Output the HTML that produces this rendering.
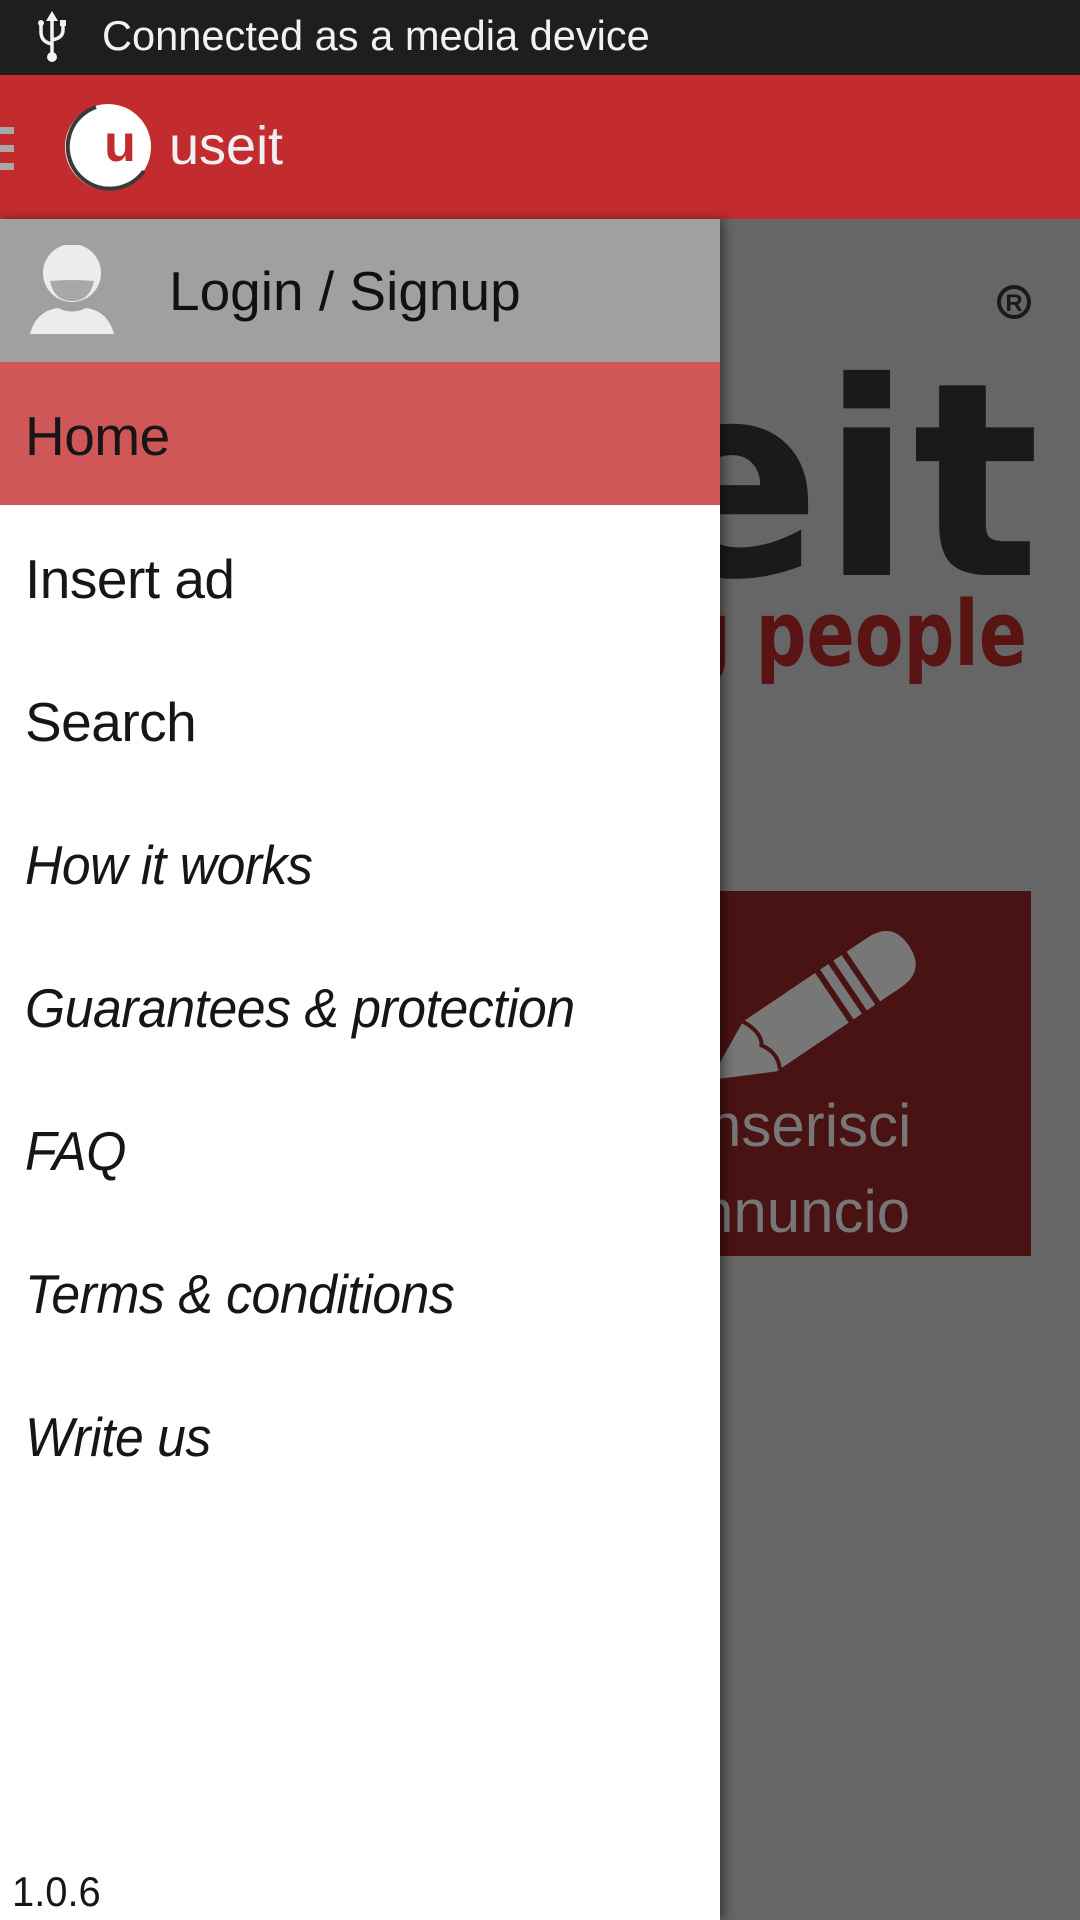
<!DOCTYPE html>
<html><head><meta charset="utf-8"><style>
*{margin:0;padding:0;box-sizing:border-box}
body{width:1080px;height:1920px;overflow:hidden;position:relative;background:#666;font-family:"Liberation Sans",sans-serif}
.status{position:absolute;left:0;top:0;width:1080px;height:75px;background:#1e1e1e;color:#f2f2f2;font-size:42px}
.status span{position:absolute;left:102px;top:12px;transform:scaleX(0.99);transform-origin:left}
.bar{position:absolute;left:0;top:75px;width:1080px;height:144px;background:#c22c2f}
.bar .t{position:absolute;left:169px;top:40px;font-size:54px;color:#f0f0f0}
.ham{position:absolute;left:0;width:14px;height:7px;background:#a8a8a8}
.drawer{position:absolute;left:0;top:219px;width:720px;height:1701px;background:#fff;box-shadow:4px 0 10px rgba(0,0,0,.45)}
.login{height:143px;background:#a0a0a0;position:relative}
.login span{position:absolute;left:169px;top:40px;font-size:55px;color:#111}
.item{height:143px;position:relative;font-size:55px;color:#161616}
.item span{position:absolute;left:25px;top:42px;letter-spacing:-0.5px;transform-origin:left;white-space:nowrap}
.home{background:#d05757}
.i span{font-style:italic;transform:scaleX(0.94)}
.ver{position:absolute;left:12px;bottom:4px;font-size:42px;color:#161616;transform:scaleX(0.95);transform-origin:left}
</style></head><body>
<div class="status">
<svg style="position:absolute;left:36px;top:10px" width="32" height="54" viewBox="0 0 32 54"><path d="M16 8 L16 44 M16 34 Q5 32 5 22 V14 M16 30 Q27 28 27 20 V14" stroke="#f2f2f2" stroke-width="3.5" fill="none"/><path d="M10 11h12l-6-10z" fill="#f2f2f2"/><circle cx="16" cy="47" r="5" fill="#f2f2f2"/><circle cx="5" cy="13" r="3" fill="#f2f2f2"/><rect x="24" y="10" width="6" height="6" fill="#f2f2f2"/></svg>
<span>Connected as a media device</span></div>
<div class="bar">
<div class="ham" style="top:52px"></div><div class="ham" style="top:70px"></div><div class="ham" style="top:88px"></div>
<svg style="position:absolute;left:62px;top:26px" width="96" height="96" viewBox="0 0 96 96"><circle cx="46" cy="46" r="43" fill="#fff"/><path d="M34 6 A42 42 0 1 0 82 70" stroke="#3a3a3a" stroke-width="4" fill="none"/><text x="58" y="60" font-family="Liberation Sans" font-weight="bold" font-size="52" fill="#c22c2f" text-anchor="middle">u</text></svg>
<div class="t">useit</div></div>
<svg style="position:absolute;left:700px;top:270px" width="380" height="1000" viewBox="0 0 380 1000">
<circle cx="314" cy="32" r="15" stroke="#1a1a1a" stroke-width="4" fill="none"/><text x="314" y="41" font-size="24" font-weight="bold" font-family="Liberation Sans" fill="#1a1a1a" text-anchor="middle">R</text>
<text x="-60" y="305" font-family="DejaVu Sans" font-weight="bold" font-size="270" fill="#1a1a1a" textLength="400" lengthAdjust="spacingAndGlyphs">eit</text>
<text x="-20" y="395" font-family="DejaVu Sans" font-weight="bold" font-size="90" fill="#5a1414" textLength="347" lengthAdjust="spacingAndGlyphs">g people</text>
<rect x="0" y="621" width="331" height="365" fill="#4a1313"/>
<g transform="translate(10,810) rotate(-34)">
<path d="M0 0 L60 -30 L210 -30 Q240 -30 240 0 Q240 30 210 30 L60 30 Z" fill="#777"/>
<path d="M150 -32 V32 M166 -32 V32 M182 -32 V32" stroke="#4a1313" stroke-width="6"/>
<path d="M60 -30 Q70 -10 62 0 Q72 15 64 30" stroke="#4a1313" stroke-width="4" fill="none"/>
</g>
<text x="8" y="876" font-size="60" fill="#777" font-family="Liberation Sans">nserisci</text>
<text x="0" y="962" font-size="60" fill="#777" font-family="Liberation Sans">nnuncio</text>
</svg>
<div class="drawer">
<div class="login">
<svg style="position:absolute;left:28px;top:26px" width="90" height="96" viewBox="0 0 90 96"><circle cx="44" cy="28" r="29" fill="#ececec"/><path d="M22 36 Q44 34 66 36 Q62 56 44 56 Q26 56 22 36z" fill="#a8a8a8"/><path d="M2 89 Q8 66 30 63 Q44 70 58 63 Q80 66 86 89z" fill="#ececec"/></svg>
<span>Login / Signup</span></div>
<div class="item home"><span>Home</span></div>
<div class="item"><span>Insert ad</span></div>
<div class="item"><span>Search</span></div>
<div class="item i"><span>How it works</span></div>
<div class="item i"><span>Guarantees &amp; protection</span></div>
<div class="item i"><span>FAQ</span></div>
<div class="item i"><span>Terms &amp; conditions</span></div>
<div class="item i"><span>Write us</span></div>
<div class="ver">1.0.6</div>
</div>
</body></html>
